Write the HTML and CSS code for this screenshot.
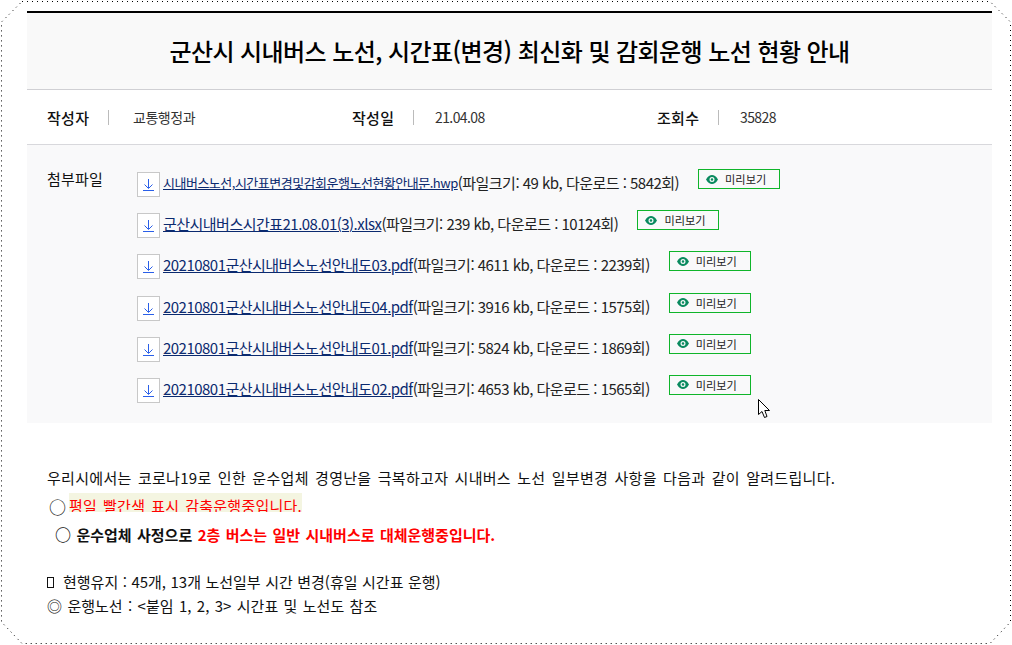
FILE: index.html
```html
<!DOCTYPE html>
<html lang="ko">
<head>
<meta charset="utf-8">
<title>군산시 시내버스 노선</title>
<link rel="stylesheet" href="styles.css">
</head>
<body>
<svg class="frame" width="1012" height="645" viewBox="0 0 1012 645" aria-hidden="true"><path d="M22 1.5H990L1010.5 22V622L990 643.5H22L1.5 622V22Z" fill="none" stroke="#000" stroke-width="1" stroke-dasharray="1 4"/></svg>
<main class="board">
  <h1 class="title">군산시 시내버스 노선, 시간표(변경) 최신화 및 감회운행 노선 현황 안내</h1>
  <div class="meta">
    <div class="meta-item"><span class="meta-label">작성자</span><span class="meta-value">교통행정과</span></div>
    <div class="meta-item"><span class="meta-label">작성일</span><span class="meta-value num">21.04.08</span></div>
    <div class="meta-item"><span class="meta-label">조회수</span><span class="meta-value num">35828</span></div>
  </div>
  <section class="files">
    <div class="files-label">첨부파일</div>
    <ul class="file-list">
      <li class="file"><span class="dl"><svg width="13" height="13" viewBox="0 0 13 13"><path d="M6.5 1V10M2.5 6.5L6.5 10.5L10.5 6.5M1 12.5H12" fill="none" stroke="#2a5fe8" stroke-width="1"/></svg></span><a class="name small" href="#">시내버스노선,시간표변경및감회운행노선현황안내문.hwp</a><span class="info">(파일크기: 49 kb, 다운로드 : 5842회)</span><a class="preview" href="#"><svg width="12" height="9" viewBox="0 0 12 9"><path d="M0 4.5C2 1 4 0 6 0S10 1 12 4.5C10 8 8 9 6 9S2 8 0 4.5ZM6 2a2.5 2.5 0 1 0 0 5a2.5 2.5 0 1 0 0-5ZM6 3.2a1.3 1.3 0 1 1 0 2.6a1.3 1.3 0 1 1 0-2.6Z" fill="#0a8a5f" fill-rule="evenodd"/></svg>미리보기</a></li>
      <li class="file"><span class="dl"><svg width="13" height="13" viewBox="0 0 13 13"><path d="M6.5 1V10M2.5 6.5L6.5 10.5L10.5 6.5M1 12.5H12" fill="none" stroke="#2a5fe8" stroke-width="1"/></svg></span><a class="name" href="#">군산시내버스시간표21.08.01(3).xlsx</a><span class="info">(파일크기: 239 kb, 다운로드 : 10124회)</span><a class="preview" href="#"><svg width="12" height="9" viewBox="0 0 12 9"><path d="M0 4.5C2 1 4 0 6 0S10 1 12 4.5C10 8 8 9 6 9S2 8 0 4.5ZM6 2a2.5 2.5 0 1 0 0 5a2.5 2.5 0 1 0 0-5ZM6 3.2a1.3 1.3 0 1 1 0 2.6a1.3 1.3 0 1 1 0-2.6Z" fill="#0a8a5f" fill-rule="evenodd"/></svg>미리보기</a></li>
      <li class="file"><span class="dl"><svg width="13" height="13" viewBox="0 0 13 13"><path d="M6.5 1V10M2.5 6.5L6.5 10.5L10.5 6.5M1 12.5H12" fill="none" stroke="#2a5fe8" stroke-width="1"/></svg></span><a class="name" href="#">20210801군산시내버스노선안내도03.pdf</a><span class="info">(파일크기: 4611 kb, 다운로드 : 2239회)</span><a class="preview" href="#"><svg width="12" height="9" viewBox="0 0 12 9"><path d="M0 4.5C2 1 4 0 6 0S10 1 12 4.5C10 8 8 9 6 9S2 8 0 4.5ZM6 2a2.5 2.5 0 1 0 0 5a2.5 2.5 0 1 0 0-5ZM6 3.2a1.3 1.3 0 1 1 0 2.6a1.3 1.3 0 1 1 0-2.6Z" fill="#0a8a5f" fill-rule="evenodd"/></svg>미리보기</a></li>
      <li class="file"><span class="dl"><svg width="13" height="13" viewBox="0 0 13 13"><path d="M6.5 1V10M2.5 6.5L6.5 10.5L10.5 6.5M1 12.5H12" fill="none" stroke="#2a5fe8" stroke-width="1"/></svg></span><a class="name" href="#">20210801군산시내버스노선안내도04.pdf</a><span class="info">(파일크기: 3916 kb, 다운로드 : 1575회)</span><a class="preview" href="#"><svg width="12" height="9" viewBox="0 0 12 9"><path d="M0 4.5C2 1 4 0 6 0S10 1 12 4.5C10 8 8 9 6 9S2 8 0 4.5ZM6 2a2.5 2.5 0 1 0 0 5a2.5 2.5 0 1 0 0-5ZM6 3.2a1.3 1.3 0 1 1 0 2.6a1.3 1.3 0 1 1 0-2.6Z" fill="#0a8a5f" fill-rule="evenodd"/></svg>미리보기</a></li>
      <li class="file"><span class="dl"><svg width="13" height="13" viewBox="0 0 13 13"><path d="M6.5 1V10M2.5 6.5L6.5 10.5L10.5 6.5M1 12.5H12" fill="none" stroke="#2a5fe8" stroke-width="1"/></svg></span><a class="name" href="#">20210801군산시내버스노선안내도01.pdf</a><span class="info">(파일크기: 5824 kb, 다운로드 : 1869회)</span><a class="preview" href="#"><svg width="12" height="9" viewBox="0 0 12 9"><path d="M0 4.5C2 1 4 0 6 0S10 1 12 4.5C10 8 8 9 6 9S2 8 0 4.5ZM6 2a2.5 2.5 0 1 0 0 5a2.5 2.5 0 1 0 0-5ZM6 3.2a1.3 1.3 0 1 1 0 2.6a1.3 1.3 0 1 1 0-2.6Z" fill="#0a8a5f" fill-rule="evenodd"/></svg>미리보기</a></li>
      <li class="file"><span class="dl"><svg width="13" height="13" viewBox="0 0 13 13"><path d="M6.5 1V10M2.5 6.5L6.5 10.5L10.5 6.5M1 12.5H12" fill="none" stroke="#2a5fe8" stroke-width="1"/></svg></span><a class="name" href="#">20210801군산시내버스노선안내도02.pdf</a><span class="info">(파일크기: 4653 kb, 다운로드 : 1565회)</span><a class="preview" href="#"><svg width="12" height="9" viewBox="0 0 12 9"><path d="M0 4.5C2 1 4 0 6 0S10 1 12 4.5C10 8 8 9 6 9S2 8 0 4.5ZM6 2a2.5 2.5 0 1 0 0 5a2.5 2.5 0 1 0 0-5ZM6 3.2a1.3 1.3 0 1 1 0 2.6a1.3 1.3 0 1 1 0-2.6Z" fill="#0a8a5f" fill-rule="evenodd"/></svg>미리보기</a></li>
    </ul>
  </section>
  <article class="content">
    <p class="line l1">우리시에서는 코로나19로 인한 운수업체 경영난을 극복하고자 시내버스 노선 일부변경 사항을 다음과 같이 알려드립니다.</p>
    <p class="line l2"><span class="circle">○</span><span class="hl">평일 빨간색 표시 감축운행중입니다.</span></p>
    <p class="line l3"><strong><span class="big">○</span> 운수업체 사정으로 <span class="red">2층 버스는 일반 시내버스로 대체운행중입니다.</span></strong></p>
    <p class="line l4"><span class="tofu"></span>현행유지 : 45개, 13개 노선일부 시간 변경(휴일 시간표 운행)</p>
    <p class="line l5">◎ 운행노선 : &lt;붙임 1, 2, 3&gt; 시간표 및 노선도 참조</p>
  </article>
</main>
<svg class="cursor" width="13" height="20" viewBox="0 0 13 20" aria-hidden="true"><path d="M.5.5V15.5L4 12.5L6.5 18.5L9 17.5L6.8 11.5H11.5Z" fill="#fff" stroke="#000" stroke-width="1"/></svg>
</body>
</html>
```
FILE: styles.css
```css
* { box-sizing: border-box; }
html, body { margin: 0; padding: 0; }
body {
  width: 1012px;
  height: 645px;
  overflow: hidden;
  position: relative;
  background: #fff;
  color: #111;
  font-family: "Noto Sans CJK KR", "Noto Sans", sans-serif;
  padding: 11px 20px 0 27px;
}
.frame { position: absolute; left: 0; top: 0; }
.cursor { position: absolute; left: 758px; top: 399px; }
.board { width: 965px; border-top: 2px solid #000; }
.title {
  margin: 0;
  height: 77px;
  background: #f9f9f9;
  border-bottom: 1px solid #d0d0d4;
  font-size: 24px;
  font-weight: 500;
  line-height: 76px;
  text-align: center;
  letter-spacing: -0.57px;
  color: #000;
}
.meta {
  height: 55px;
  display: flex;
  align-items: center;
  padding-left: 20px;
  border-bottom: 1px solid #d8d8dc;
}
.meta-item { width: 305px; display: flex; align-items: center; }
.meta-label {
  font-size: 15px;
  font-weight: 500;
  line-height: 15px;
  width: 86px;
  letter-spacing: 0.3px;
  color: #111;
  position: relative;
}
.meta-label::after {
  content: "";
  position: absolute;
  left: 61px;
  top: 0;
  width: 1px;
  height: 15px;
  background: #bbb;
}
.meta-value { font-size: 14px; color: #333; letter-spacing: -0.45px; }
.meta-value.num { font-size: 14px; letter-spacing: -0.6px; margin-left: -3px; }
.files {
  height: 278px;
  background: #f9f9fa;
  display: flex;
  padding: 26px 0 0 20px;
}
.files-label { width: 90px; font-size: 15px; line-height: 15px; letter-spacing: 0.2px; color: #111; }
.file-list { list-style: none; margin: 1px 0 0; padding: 0; }
.file { height: 41.2px; display: flex; align-items: flex-start; font-size: 15px; letter-spacing: -0.52px; color: #222; white-space: nowrap; }
.dl {
  width: 23px;
  height: 25px;
  border: 1px solid #c8c8c8;
  background: #fff;
  display: flex;
  align-items: center;
  justify-content: center;
  margin-right: 3px;
}
.name { color: #0b2a6f; text-decoration: underline; line-height: 22px; }
.name.small { font-size: 13px; letter-spacing: -0.5px; }
.info { line-height: 22px; }
.preview {
  width: 82px;
  height: 20px;
  margin: -3px 0 0 19px;
  border: 1px solid #0fb52a;
  display: flex;
  align-items: center;
  padding-left: 7px;
  gap: 7px;
  font-size: 11.2px;
  letter-spacing: 0;
  color: #222;
  text-decoration: none;
}
.content { padding: 43px 0 0 20px; font-size: 15px; color: #111; }
.line { margin: 0; line-height: 24px; height: 24px; white-space: nowrap; }
.l1 { height: 27px; letter-spacing: 0.3px; word-spacing: 1.8px; }
.l2 { display: flex; align-items: flex-start; padding-left: 2px; height: 29px; }
.circle { width: 20px; height: 24px; font-size: 17px; line-height: 28px; }
.hl { background: #f4f5e1; color: #f00; height: 19px; overflow: hidden; line-height: 26px; word-spacing: 1.5px; letter-spacing: 0.25px; }
.big { font-size: 16px; }
.l3 { padding-left: 8px; height: 26px; word-spacing: 1.2px; }
.red { color: #f00; }
.l4 { margin-top: 22px; display: flex; align-items: center; word-spacing: 0.3px; }
.l5 { word-spacing: 1.2px; }
.tofu { width: 7px; height: 11px; border: 1px solid #111; margin-right: 9px; }
```
